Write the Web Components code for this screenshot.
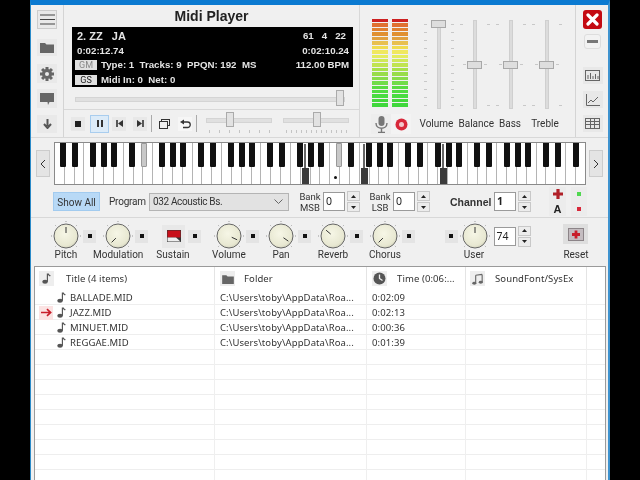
<!DOCTYPE html>
<html><head><meta charset="utf-8"><style>
html,body{margin:0;padding:0;background:#000;height:480px;overflow:hidden}
body{display:flex;justify-content:center;font:10px Roboto,sans-serif;color:#333}
</style></head><body>
<midi-app></midi-app>
<script>
const def=(n,css,html,init)=>{customElements.define(n,class extends HTMLElement{connectedCallback(){if(this.shadowRoot)return;const r=this.attachShadow({mode:'open'});const a=k=>this.getAttribute(k);r.innerHTML='<style>'+css+'</style>'+(typeof html==='function'?html(a):html);init&&init(r,a);}})};
const ICON={
 note:'<svg width="9" height="11" viewBox="0 0 10 12"><ellipse cx="3.4" cy="9.600" rx="3.100" ry="2.100" fill="#555"/><path d="M6 9.500V1h1c.4 1.300 1.400 1.600 2.200 2.400" fill="none" stroke="#555" stroke-width="1.300"/></svg>',
 folder:'<svg width="12" height="10" viewBox="0 0 14 12"><path d="M0 1.500h5l1.500 1.500H14v9H0z" fill="#666"/></svg>',
 clock:'<svg width="13" height="13" viewBox="0 0 13 13"><circle cx="6.500" cy="6.500" r="6" fill="#555"/><path d="M6.500 2.500v4l3 2" stroke="#eee" stroke-width="1.300" fill="none"/></svg>',
 notes:'<svg width="12" height="12" viewBox="0 0 13 13"><path d="M4 2.500V11M11 1.500V10M4 2.500L11 1.500" stroke="#666" stroke-width="1.200" fill="none"/><ellipse cx="2.500" cy="11" rx="2.200" ry="1.600" fill="#666"/><ellipse cx="9.500" cy="10" rx="2.200" ry="1.600" fill="#666"/></svg>'
};
def('dot-btn',':host{width:13px;height:13px;background:#e4e4e4;display:flex;align-items:center;justify-content:center;flex:none}i{width:4px;height:4px;background:#111;display:block}','<i></i>');
def('spin-box',`:host{display:flex;align-items:center;gap:2px;font:var(--f,10.5px "Noto Sans",sans-serif);color:#222}
.i{height:17px;background:#fff;border:1px solid #9a9a9a;line-height:17px;padding-left:2px;box-sizing:content-box;width:18px}
.s{display:flex;flex-direction:column;gap:1px;width:13px}
.s b{height:8px;background:#ececec;border:.5px solid #c8c8c8;display:flex;align-items:center;justify-content:center}
.s svg{display:block}`,a=>`<div class="i">${a('v')}</div><div class="s"><b><svg width="5" height="3"><path d="M0 3L2.500 0 5 3z" fill="#222"/></svg></b><b><svg width="5" height="3"><path d="M0 0L5 0 2.500 3z" fill="#222"/></svg></b></div>`);
def('v-fader',`:host{display:block;width:36px;height:89px;position:relative}
.t{position:absolute;left:15.500px;top:0;bottom:0;width:4px;background:#dcdcdc;border:.5px solid #cfcfcf;box-sizing:border-box}
.th{position:absolute;left:10px;width:15px;height:8px;background:#dedede;border:1px solid #a8a8a8;box-sizing:border-box}
.k{position:absolute;width:3px;height:1px;background:#c8c8c8}`,
a=>{let h='<div class="t"></div>';const v=a('v')==='1';const ys=v?[0,1,2,3,4,5,6,7,8,9,10].map(i=>4+i*8.100):[4,85];ys.forEach(y=>{h+=`<div class="k" style="left:3px;top:${y}px"></div><div class="k" style="right:3px;top:${y}px"></div>`});if(!v){h+=`<div class="k" style="left:6px;top:44px"></div><div class="k" style="right:6px;top:44px"></div>`}
return h+`<div class="th" style="top:${a('t')}px"></div>`});
def('h-slider',`:host{display:block;width:66px;height:24px;position:relative}
.t{position:absolute;left:0;right:0;top:6px;height:3px;background:#e0e0e0;border:.5px solid #d4d4d4}
.th{position:absolute;top:0;width:8px;height:15px;background:#e2e2e2;border:1px solid #aaa;box-sizing:border-box}
.k{position:absolute;top:18px;width:1px;height:3px;background:#c4c4c4}`,
a=>{let h='<div class="t"></div>';const n=+a('n');for(let i=0;i<n;i++)h+=`<div class="k" style="left:${3+i*60/(n-1)}px"></div>`;return h+`<div class="th" style="left:${a('x')}px"></div>`});
def('k-nob',`:host{display:block;width:30px;height:30px;flex:none}svg{display:block}`,a=>{
 const ang=+a('a')*Math.PI/180,s=Math.sin(ang),c=-Math.cos(ang);let t='';
 [-135,-90,-45,0,45,90,135].forEach(d=>{const r=d*Math.PI/180;t+=`<path d="M${15+14*Math.sin(r)} ${15-14*Math.cos(r)}L${15+15*Math.sin(r)} ${15-15*Math.cos(r)}" stroke="#999" stroke-width="1"/>`});
 return `<svg width="30" height="30" viewBox="0 0 30 30"><defs><radialGradient id="g" cx=".45" cy=".4" r=".7"><stop offset="0" stop-color="#f6f6e6"/><stop offset=".7" stop-color="#e8e8d2"/><stop offset="1" stop-color="#c6c6b0"/></radialGradient></defs>${t}<circle cx="15" cy="15" r="12" fill="url(#g)" stroke="#666" stroke-width="1"/><path d="M${15+3*s} ${15+3*c}L${15+9*s} ${15+9*c}" stroke="#333" stroke-width="1"/></svg>`});
def('knob-unit',`:host{display:block;width:52px;position:relative;height:42px}
.r{display:flex;align-items:center;gap:2px;height:30px}
.l{position:absolute;left:-10px;width:50px;top:27px;text-align:center;font:10px/14px Roboto,sans-serif;color:#333;white-space:nowrap}`,
a=>`<div class="r"><k-nob a="${a('a')}"></k-nob><dot-btn></dot-btn></div><div class="l">${a('l')}</div>`);
def('pia-no',`:host{display:block;width:532px;height:43px;position:relative;background:#fff;border:1px solid #8a8a8a;box-sizing:border-box}
.w{display:flex;height:100%}.w i{flex:1;border-right:1px solid #b4b4b4}.w i:last-child{border:0}
.b{position:absolute;top:0;width:6px;height:24px;background:#111;border-radius:0 0 1px 1px}
.g{background:#c8c8c8;border:.5px solid #999;box-sizing:border-box}
.d{position:absolute;width:7px;height:16px;bottom:0;background:#3c3c3c}
.l{position:absolute;top:1px;width:2px;height:24px;background:#666}
.o{position:absolute;width:3px;height:3px;border-radius:50%;background:#111;top:33px}`,()=>{
 const W=532/54;let h='<div class="w">'+'<i></i>'.repeat(54)+'</div>';
 [25,31,39].forEach(n=>{const x=(n+.500)*W;h+=`<div class="l" style="left:${x-2}px"></div><div class="d" style="left:${x-4}px"></div>`});
 const bl=[];for(let o=0;o<8;o++)[1,2,4,5,6].forEach(k=>{const n=o*7+k;if(n<54)bl.push(n)});
 bl.forEach(n=>{const g=n===9||n===29;const m=n%7;const off=(m===1||m===4)?-1:(m===2||m===6)?.600:0;h+=`<div class="b${g?' g':''}" style="left:${n*W-3.500+off}px"></div>`});
 h+=`<div class="o" style="left:${28.500*W-2}px"></div>`;return h});
const COLS='180px 152px 99px 121px 1fr';
def('list-row',`:host{display:grid;grid-template-columns:${COLS};height:15px;border-bottom:1px solid #eee;box-sizing:border-box;font:9.500px/15px "Noto Sans",sans-serif;letter-spacing:.1px;color:#333;white-space:nowrap}
div{border-right:1px solid #efefef;overflow:hidden;display:flex;align-items:center;height:15px}
div:last-child{border:0}.c1{padding-left:4px;gap:5px}.ar{width:14px;height:14px;display:flex;align-items:center;justify-content:center;margin-right:-1px;flex:none}
.ar.on{background:#fbe3e3}.c2{padding-left:5px}.c3{padding-left:5px}.nm{margin-left:-1px}`,
a=>`<div class="c1"><span class="ar ${a('cur')?'on':''}">${a('cur')?'<svg width="11" height="9" viewBox="0 0 12 9"><path d="M0 4.500h10M6.500 .8L10.500 4.500 6.500 8.200" fill="none" stroke="#c81e2a" stroke-width="1.800"/></svg>':''}</span>${a('t')?ICON.note:''}<span class="nm">${a('t')||''}</span></div><div class="c2">${a('t')?'C:\\Users\\toby\\AppData\\Roa...':''}</div><div class="c3">${a('d')||''}</div><div></div><div></div>`);
def('song-list',`:host{display:block;height:214px;background:#fff;border:1px solid #9a9a9a;border-bottom:0;margin:0 2px 0 3px;overflow:hidden}
.h{display:grid;grid-template-columns:${COLS};height:23px;font:9.500px/23px "Noto Sans",sans-serif;letter-spacing:.1px;color:#333;white-space:nowrap}
.h div{display:flex;align-items:center;border-right:1px solid #e4e4e4;height:23px}.h div:last-child{border:0}
.ic{width:15px;height:15px;background:#eee;display:flex;align-items:center;justify-content:center}`,
()=>{const cell=(i,t,p,g)=>`<div style="padding-left:${p}px"><span class="ic">${i}</span><span style="margin-left:${g}px">${t}</span></div>`;
 let rows='';for(let i=0;i<10;i++)rows+='<list-row></list-row>';
 return `<div class="h">${cell(ICON.note,'Title (4 items)',4,12)}${cell(ICON.folder,'Folder',5,9)}${cell(ICON.clock,'Time (0:06:...',5,10)}${cell(ICON.notes,'SoundFont/SysEx',4,10)}<div></div></div>
 <list-row t="BALLADE.MID" d="0:02:09"></list-row><list-row cur="1" t="JAZZ.MID" d="0:02:13"></list-row><list-row t="MINUET.MID" d="0:00:36"></list-row><list-row t="REGGAE.MID" d="0:01:39"></list-row>${rows}`});
def('side-bar',`:host{display:flex;flex-direction:column;align-items:center;width:33px;border-right:1px solid #d4d4d4;box-sizing:border-box;padding-top:5px}
b{display:flex;align-items:center;justify-content:center;width:20px;height:19px;background:#e9e9e9}`,
`<b style="border:.5px solid #ccc;box-sizing:border-box"><svg width="15" height="11"><path d="M0 1h15M0 5.500h15M0 10h15" stroke="#444" stroke-width="1.200"/></svg></b>
<b style="margin-top:10px;height:17px"><svg width="14" height="11" viewBox="0 0 14 11"><path d="M0 1h5l1.500 1.500H14V11H0z" fill="#666"/></svg></b>
<b style="margin-top:8px;height:19px"><svg width="14" height="14" viewBox="-7 -7 14 14"><g fill="#666"><circle r="5"/>${[0,45,90,135].map(r=>`<rect x="-1.500" y="-7" width="3" height="14" transform="rotate(${r})"/>`).join('')}</g><circle r="2" fill="#e9e9e9"/></svg></b>
<b style="margin-top:6px;height:19px"><svg width="14" height="12" viewBox="0 0 14 12"><path d="M0 0h14v9H9.500L8 12 7.500 9H0z" fill="#666"/></svg></b>
<b style="margin-top:7px;height:18px"><svg width="9" height="10" viewBox="0 0 9 10"><path d="M4.500 0v7M1 5l3.500 4L8 5" fill="none" stroke="#555" stroke-width="2"/></svg></b>`);
def('player-core',`:host{display:block;width:296px;border-right:1px solid #d8d8d8;box-sizing:border-box}
h1{margin:0;font:bold 14px/16px "Liberation Sans",sans-serif;color:#222;text-align:center;padding:3px 0 3px}
.d{margin-left:8px;width:281px;height:60px;background:#000;color:#e4e4e4;font:bold 9.700px/14.500px "Liberation Sans",sans-serif;box-sizing:border-box;padding:2px 4px 0 3px}
.l{display:flex;justify-content:space-between;height:14.500px;white-space:nowrap}
.l span{display:flex;align-items:center;gap:4px}
.in{padding-left:2px}
.bd{background:#e0e0e0;color:#888;font:normal 9px/10px Roboto,sans-serif;width:22px;height:10px;text-align:center;display:inline-block}
.bd.s{color:#222}
.seek{height:22px;position:relative;margin:0 10px 0 11px}
.seek i{position:absolute;left:0;right:4px;top:9.500px;height:3px;background:#e0e0e0;border:.5px solid #d4d4d4}
.seek b{position:absolute;right:5px;top:3px;width:8px;height:16px;background:#e2e2e2;border:1px solid #aaa;box-sizing:border-box}
.tr{border-top:1px solid #d8d8d8;display:flex;align-items:center;height:27px;padding-left:7px}
.bt{width:14px;height:14px;background:#e8e8e8;display:flex;align-items:center;justify-content:center;margin-right:7px}
.p{width:19px;height:18px;background:#dcebf8;border:1px solid #a9cdee;box-sizing:border-box;margin:0 3px 0 -2px}
.sp{width:1px;height:17px;background:#aaa}`,
`<h1>Midi Player</h1>
<div class="d">
<div class="l in" style="font-size:11px"><span>2. ZZ&nbsp;&nbsp;&nbsp;JA</span><span style="font-size:9.700px;margin-right:3px;gap:0">61&nbsp;&nbsp;&nbsp;4&nbsp;&nbsp;&nbsp;22</span></div>
<div class="l in"><span>0:02:12.74</span><span>0:02:10.24</span></div>
<div class="l"><span><i class="bd">GM</i>Type: 1&nbsp;&nbsp;Tracks: 9&nbsp;&nbsp;PPQN: 192&nbsp;&nbsp;MS</span><span>112.00 BPM</span></div>
<div class="l"><span><i class="bd s" style="font-style:normal">GS</i>Midi In: 0&nbsp;&nbsp;Net: 0</span></div>
</div>
<div class="seek"><i></i><b></b></div>
<div class="tr">
<div class="bt"><svg width="6" height="6"><rect width="6" height="6" fill="#222"/></svg></div>
<div class="bt p"><svg width="6" height="7"><path d="M1 0v7M5 0v7" stroke="#333" stroke-width="2"/></svg></div>
<div class="bt"><svg width="7" height="7"><path d="M1 0v7" stroke="#333" stroke-width="1.600"/><path d="M7 0v7L2 3.500z" fill="#333"/></svg></div>
<div class="bt" style="margin-right:4px"><svg width="7" height="7"><path d="M6 0v7" stroke="#333" stroke-width="1.600"/><path d="M0 0v7L5 3.500z" fill="#333"/></svg></div>
<div class="sp"></div>
<div class="bt" style="margin:0 7px 0 5px;background:none"><svg width="11" height="10"><rect x="2.500" y=".5" width="8" height="6" fill="none" stroke="#333"/><rect x=".5" y="2.500" width="8" height="7" fill="#f0f0f0" stroke="#333"/></svg></div>
<div class="bt" style="margin-right:4px;background:#f6f6f6"><svg width="11" height="10" viewBox="0 0 11 10"><path d="M3 3h4.500a2.600 2.600 0 0 1 0 5.500H3" fill="none" stroke="#333" stroke-width="1.300"/><path d="M4 .5v5L0 3z" fill="#333"/></svg></div>
<div class="sp"></div>
<h-slider n="7" x="20" style="margin-left:9px"></h-slider>
<h-slider n="13" x="30" style="margin-left:11px"></h-slider>
</div>`);
def('vu-bar',`:host{display:flex;flex-direction:column;gap:1px;width:16px}i{display:block;height:3.450px}`,()=>{
 const c=['#cc2020','#e07030','#e08030','#e09030','#e0a040','#e8c050','#f0dc50','#f0e860','#e4ec60','#d0e858','#c0e450','#a8e048','#98dc48','#88dc48','#70dc48','#58dc40','#50dc40','#48dc40','#44d83c','#40d83c'];
 return c.map(x=>`<i style="background:${x}"></i>`).join('')});
def('mix-er',`:host{display:block;width:215px;padding:14px 0 0 12px;box-sizing:border-box}
.r{display:flex}.vu{display:flex;gap:4px;margin-right:13px}.f{display:flex;margin-top:1px}
.b{display:flex;align-items:center;height:22px;margin-top:4px;font:10px/14px Roboto,sans-serif;color:#333;white-space:nowrap}
.b span.t{width:33px;text-align:center;flex:none}
.ib{width:20px;height:20px;display:flex;align-items:center;justify-content:center;background:#ededed;flex:none}`,
`<div class="r"><div class="vu"><vu-bar></vu-bar><vu-bar></vu-bar></div><div class="f"><v-fader v="1" t="0"></v-fader><v-fader t="41"></v-fader><v-fader t="41"></v-fader><v-fader t="41"></v-fader></div></div>
<div class="b"><span class="ib" style="margin-left:-1px"><svg width="13" height="17" viewBox="0 0 13 17"><rect x="3.500" y="0" width="6" height="10" rx="3" fill="#777"/><path d="M1 7c0 7 11 7 11 0M6.500 12v4M3 16.500h7" fill="none" stroke="#777" stroke-width="1.400"/></svg></span><span class="ib" style="background:#f3f3f3"><svg width="13" height="13"><circle cx="6.500" cy="6.500" r="6" fill="#d8283a"/><circle cx="6.500" cy="6.500" r="2.500" fill="#f3c8cc"/></svg></span>
<span class="t" style="margin-left:8.500px">Volume</span><span class="t" style="margin-left:6px">Balance</span><span class="t" style="margin-left:2px">Bass</span><span class="t" style="margin-left:2px">Treble</span></div>`);
def('win-bar',`:host{display:flex;flex-direction:column;align-items:center;flex:1;border-left:1px solid #d4d4d4;padding:5px 0 0 1px}
.x{width:19px;height:19px;background:#c40a12;border-radius:3px;display:flex;align-items:center;justify-content:center}
.m{width:17px;height:15px;margin-top:5px;background:#f2f2f2;border:.5px solid #ddd;border-radius:3px;box-sizing:border-box;display:flex;align-items:center;justify-content:center}
.i{width:20px;height:17px;background:#e8e8e8;display:flex;align-items:center;justify-content:center;margin-top:7px}`,
`<div class="x"><svg width="13" height="13"><path d="M2 2l9 9M11 2l-9 9" stroke="#fff" stroke-width="3.200" stroke-linecap="round"/></svg></div>
<div class="m"><svg width="11" height="3"><rect width="11" height="3" fill="#777"/></svg></div>
<div class="i" style="margin-top:18px"><svg width="15" height="11"><rect x=".5" y=".5" width="14" height="10" fill="none" stroke="#666"/><path d="M3 9V5M5.500 9V3M8 9V6M10.500 9V4M13 9V6" stroke="#666"/></svg></div>
<div class="i"><svg width="14" height="12"><path d="M.5 0v11.500H14" fill="none" stroke="#666"/><path d="M2 9l3-3 2 2 5-5" fill="none" stroke="#666"/></svg></div>
<div class="i"><svg width="15" height="11"><path d="M.5 0v11M5.500 0v11M9.500 0v11M14.500 0v11M0 .5h15M0 3.500h15M0 6.500h15M0 10.500h15" stroke="#666"/></svg></div>`);
def('piano-row',`:host{display:flex;align-items:flex-start;height:51px;box-sizing:border-box;padding:4px 0 0 5px}
.b{width:14px;height:27px;margin-top:8px;background:#e4e4e4;border:.5px solid #ccc;box-sizing:border-box;display:flex;align-items:center;justify-content:center}
pia-no{margin:0 3px 0 4px}`,
`<div class="b"><svg width="6" height="10"><path d="M5 1L1 5l4 4" fill="none" stroke="#333"/></svg></div><pia-no></pia-no><div class="b"><svg width="6" height="10"><path d="M1 1l4 4-4 4" fill="none" stroke="#333"/></svg></div>`);
def('program-row',`:host{display:flex;align-items:center;height:29px;padding-bottom:3px;border-bottom:1px solid #d8d8d8;box-sizing:border-box;font:10px/12px Roboto,sans-serif;color:#333;white-space:nowrap}
.sa{margin-left:22px;width:47px;height:19px;background:#b8d9f6;border:.5px solid #a2cbef;box-sizing:border-box;text-align:center;line-height:19px;flex:none}
.sel{margin-left:4px;width:140px;height:18px;background:#e2e2e2;border:.5px solid #b4b4b4;box-sizing:border-box;display:flex;align-items:center;justify-content:space-between;padding:0 5px 0 3px;flex:none;letter-spacing:-.35px}
.bk{text-align:center;width:24px;font-size:9.500px;line-height:11px;flex:none}
.t{display:grid;grid-template-rows:14px 14px;gap:1px;width:17px;background:#ececec;text-align:center;flex:none}
.t div{display:flex;align-items:center;justify-content:center}`,
`<div class="sa">Show All</div><span style="margin-left:9px;width:36px;flex:none;letter-spacing:-.2px">Program</span>
<div class="sel"><span>032 Acoustic Bs.</span><svg width="9" height="5"><path d="M.5.500L4.500 4.500 8.500.500" fill="none" stroke="#666"/></svg></div>
<div class="bk" style="margin-left:9px">Bank<br>MSB</div><spin-box v="0" style="margin-left:1px"></spin-box>
<div class="bk" style="margin-left:8px">Bank<br>LSB</div><spin-box v="0" style="margin-left:1px"></spin-box>
<span style="margin-left:20px;width:41px;flex:none;font:bold 10.500px 'Liberation Sans',sans-serif">Channel</span><spin-box v="1" style="margin-left:3px;--f:bold 10.500px 'Noto Sans',sans-serif"></spin-box>
<div class="t" style="margin-left:18px"><div><svg width="10" height="10"><path d="M5 0v10M0 5h10" stroke="#b02028" stroke-width="3.200"/></svg></div><div style="font:bold 11px 'Liberation Sans',sans-serif;color:#222">A</div></div>
<div class="t" style="margin-left:5px;width:16px"><div><i style="width:4px;height:4px;background:#50d850;display:block"></i></div><div><i style="width:4px;height:4px;background:#d8283a;display:block"></i></div></div>`);
def('knob-row',`:host{display:flex;height:48px;box-sizing:border-box;padding:3px 0 0 20px;font:10px/14px Roboto,sans-serif;color:#333;white-space:nowrap}
.sus{width:52px;position:relative;height:42px;flex:none}
.sus .r{display:flex;align-items:center;height:30px;gap:3px}
.sb{width:23px;height:23px;background:#e8e8e8;display:flex;align-items:center;justify-content:center;margin-left:7px}
.lb{text-align:center;position:absolute;top:27px;left:-7px;width:50px}
.u{display:flex;align-items:center;height:30px;gap:2px}
.rs{width:25px;height:20px;background:#dedede;display:flex;align-items:center;justify-content:center;margin-top:3px}`,
`<knob-unit a="0" l="Pitch"></knob-unit><knob-unit a="-135" l="Modulation"></knob-unit>
<div class="sus"><div class="r"><span class="sb"><svg width="14" height="12"><rect width="14" height="12" fill="#333"/><rect x=".5" y=".5" width="13" height="7" fill="#c8101a"/><path d="M.5 11.500V7.500H9L13.500 11.500z" fill="#eee"/></svg></span><dot-btn></dot-btn></div><div class="lb">Sustain</div></div>
<knob-unit a="115" l="Volume" style="margin-left:7px"></knob-unit><knob-unit a="125" l="Pan"></knob-unit><knob-unit a="-50" l="Reverb"></knob-unit><knob-unit a="-135" l="Chorus"></knob-unit>
<div style="position:relative;margin-left:22.500px;width:90px;height:42px;flex:none"><div class="u"><dot-btn></dot-btn><k-nob a="0"></k-nob><spin-box v="74" style="margin-left:2px"></spin-box></div><div class="lb" style="left:14.500px;width:30px">User</div></div>
<div style="position:relative;margin-left:28.500px;width:26px;height:42px;flex:none"><div class="rs"><svg width="16" height="13"><rect width="16" height="13" fill="#8c8488"/><rect x="1" y="1" width="14" height="11" fill="#c4bcc0"/><path d="M8 2.500v8M4 6.500h8" stroke="#c81e2a" stroke-width="2.800"/></svg></div><div class="lb" style="left:-2px;width:30px">Reset</div></div>`);
def('midi-app',`:host{display:block;width:580px;height:480px;background:#f0f0f0;box-sizing:border-box;border-top:5px solid #0b7ad1;border-left:1px solid #2a8ac8;border-right:2px solid #3f93cf;filter:blur(.35px);overflow:hidden}
.top{display:flex;height:133px;border-bottom:1px solid #d8d8d8;box-sizing:border-box}`,
`<div class="top"><side-bar></side-bar><player-core></player-core><mix-er></mix-er><win-bar></win-bar></div>
<piano-row></piano-row><program-row></program-row><knob-row></knob-row><song-list></song-list>`);
</script></body></html>
